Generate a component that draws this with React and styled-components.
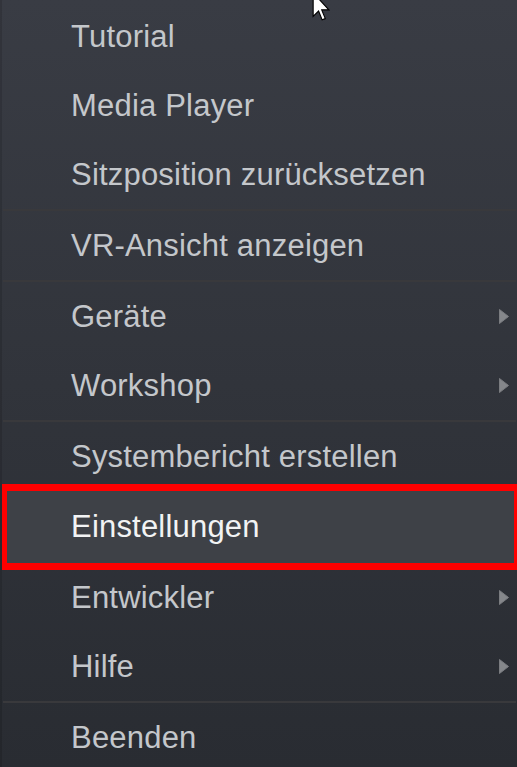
import React from 'react'
import styled, { createGlobalStyle } from 'styled-components'

const GlobalStyle = createGlobalStyle`
    html, body {
        margin: 0;
        padding: 0;
        background: #2b2e35;
        overflow: hidden;
    }
`;

const Menu = styled.div`
    position: relative;
    width: 517px;
    height: 767px;
    padding-top: 2px;
    box-sizing: border-box;
    overflow: hidden;
    background: linear-gradient(180deg, #393c44 0%, #31343b 50%, #292c32 100%);
    border-left: 2px solid rgba(0, 0, 0, 0.12);
    font-family: "Liberation Sans", Arial, sans-serif;
`;

const Item = styled.div`
    position: relative;
    display: flex;
    align-items: center;
    height: ${({ $active }) => ($active ? 72 : 69)}px;
    margin: ${({ $active }) => ($active ? '0 3px 0 5px' : '0')};
    padding: 0 8px 0 ${({ $active }) => ($active ? 64 : 69)}px;
    background: ${({ $active }) => ($active ? '#3e4147' : 'transparent')};
    color: ${({ $active }) => ($active ? '#f2f3f4' : '#c4c7cb')};
    font-size: 31px;
    letter-spacing: 0.2px;
    white-space: nowrap;

    ${({ $active }) => $active && `
        &::after {
            content: '';
            position: absolute;
            top: -7px;
            bottom: -7px;
            left: -7px;
            right: -7px;
            border: 7px solid #ff0000;
        }
    `}
`;

const Label = styled.span`
    flex: 1;
`;

const Separator = styled.div`
    height: 2px;
    margin: 0 1px 0 1px;
    background: #39393c;
`;

const Cursor = styled.svg`
    position: absolute;
    left: 310px;
    top: -8px;
`;

const Arrow = () => (
    <svg width="10" height="15" viewBox="0 0 10 15">
        <path d="M0.5 0.5 L9.5 7.5 L0.5 14.5 Z" fill="#85878b" stroke="#7a7c80" strokeWidth="1" strokeLinejoin="round" />
    </svg>
);

const items = [
    { label: 'Tutorial' },
    { label: 'Media Player' },
    { label: 'Sitzposition zurücksetzen', sep: true },
    { label: 'VR-Ansicht anzeigen', sep: true },
    { label: 'Geräte', sub: true },
    { label: 'Workshop', sub: true, sep: true },
    { label: 'Systembericht erstellen' },
    { label: 'Einstellungen', active: true },
    { label: 'Entwickler', sub: true },
    { label: 'Hilfe', sub: true, sep: true },
    { label: 'Beenden' },
];

const App = () => {
    return (
        <>
            <GlobalStyle />
            <Menu>
                {items.map((item) => (
                    <React.Fragment key={item.label}>
                        <Item $active={item.active}>
                            <Label>{item.label}</Label>
                            {item.sub && <Arrow />}
                        </Item>
                        {item.sep && <Separator />}
                    </React.Fragment>
                ))}
                <Cursor width="18" height="30" viewBox="0 0 12 21">
                    <path
                        d="M0.5 0.5 L0.5 17 L4.3 13.3 L6.8 19.5 L9 18.6 L6.5 12.5 L11.5 12.5 Z"
                        fill="#ffffff"
                        stroke="#000000"
                        strokeWidth="0.8"
                        strokeLinejoin="miter"
                    />
                </Cursor>
            </Menu>
        </>
    )
}

export default App
